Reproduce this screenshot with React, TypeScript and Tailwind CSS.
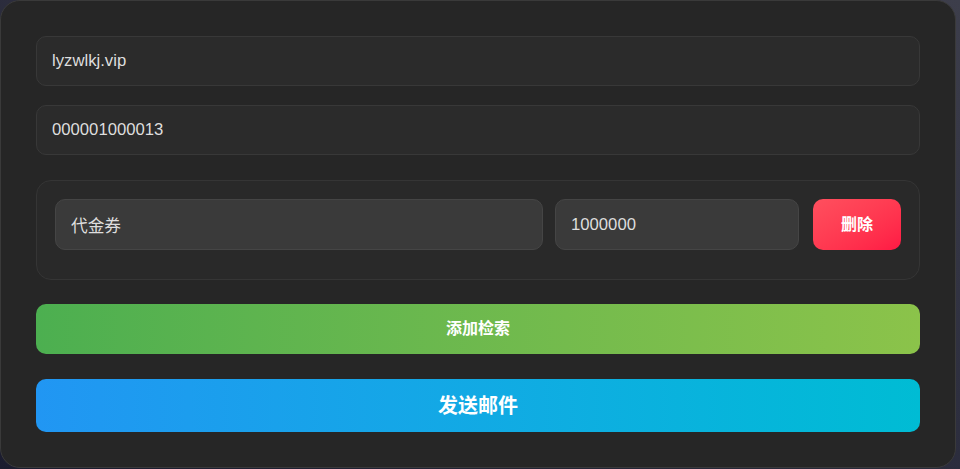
import { useState } from "react";

const font = { fontFamily: '"Liberation Sans", Arial, "Noto Sans CJK SC", sans-serif' };

export default function App() {
    const [domain, setDomain] = useState("lyzwlkj.vip");
    const [uid, setUid] = useState("000001000013");
    const [items, setItems] = useState([{ name: "代金券", amount: "1000000" }]);

    return (
        <div
            className="h-[469px] w-[960px] overflow-hidden bg-gradient-to-tr from-[#1b1c2f] to-[#3d3e4b]"
            style={font}
        >
            <div className="box-border h-[468px] w-[956px] rounded-[20px] border border-[#3a3a3a] bg-[#262626] px-[35px] pt-[35px]">
                {/* Domain + user id */}
                <input
                    value={domain}
                    onChange={(e) => setDomain(e.target.value)}
                    className="box-border block h-[50px] w-full rounded-[10px] border border-[#383838] bg-[#2b2b2b] px-[15px] text-[16.7px] text-[#dedede] outline-none"
                />
                <input
                    value={uid}
                    onChange={(e) => setUid(e.target.value)}
                    className="mt-[19px] box-border block h-[50px] w-full rounded-[10px] border border-[#383838] bg-[#2b2b2b] px-[15px] text-[16.7px] text-[#dedede] outline-none"
                />

                {/* Item rows */}
                {items.map((item, i) => (
                    <div
                        key={i}
                        className="mt-[25px] box-border h-[100px] rounded-[15px] border border-[#353535] bg-[#292929] p-[18px]"
                    >
                        <div className="flex items-center gap-3">
                            <input
                                value={item.name}
                                onChange={(e) =>
                                    setItems(items.map((it, j) => (j === i ? { ...it, name: e.target.value } : it)))
                                }
                                className="box-border h-[51px] w-[488px] shrink-0 rounded-[10px] border border-[#454545] bg-[#3a3a3a] px-[15px] text-[16.7px] text-[#dedede] outline-none"
                            />
                            <input
                                value={item.amount}
                                onChange={(e) =>
                                    setItems(items.map((it, j) => (j === i ? { ...it, amount: e.target.value } : it)))
                                }
                                className="box-border h-[51px] w-0 min-w-0 flex-1 rounded-[10px] border border-[#454545] bg-[#3a3a3a] px-[15px] text-[16.7px] text-[#dedede] outline-none"
                            />
                            <button
                                onClick={() => setItems(items.filter((_, j) => j !== i))}
                                className="ml-0.5 h-[51px] w-[88px] shrink-0 rounded-[10px] bg-gradient-to-br from-[#ff4f5e] to-[#ff1744] text-[16px] font-bold text-white"
                            >
                                删除
                            </button>
                        </div>
                    </div>
                ))}

                <button
                    onClick={() => setItems([...items, { name: "", amount: "" }])}
                    className="mt-[24px] block h-[50px] w-full rounded-[10px] bg-gradient-to-r from-[#4caf50] to-[#8bc34a] text-[16px] font-bold text-white"
                >
                    添加检索
                </button>
                <button className="mt-[25px] block h-[53px] w-full rounded-[10px] bg-gradient-to-r from-[#2196f3] to-[#00bcd4] text-[20px] font-bold text-white">
                    发送邮件
                </button>
            </div>
        </div>
    );
}
